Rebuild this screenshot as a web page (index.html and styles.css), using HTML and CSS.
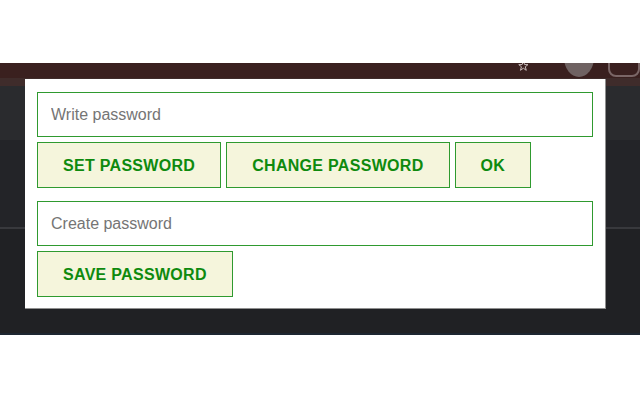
FILE: index.html
```html
<!DOCTYPE html>
<html>
<head>
<meta charset="utf-8">
<link rel="stylesheet" href="styles.css">
</head>
<body>
<div class="page">
  <div class="browser">
    <div class="tabstrip">
      <svg class="star" width="14" height="10" viewBox="0 0 14 10"><path d="M7 -4 L8.6 0.5 L13 0.6 L9.5 3.4 L10.8 8 L7 5.3 L3.2 8 L4.5 3.4 L1 0.6 L5.4 0.5 Z" fill="none" stroke="#c9bcbc" stroke-width="1.3"/></svg>
      <div class="avatar"></div>
      <div class="menu-btn"></div>
    </div>
    <div class="toolbar"></div>
    <div class="content">
      <div class="band-a"></div>
      <div class="band-b"></div>
      <div class="divider"></div>
      <div class="band-c"></div>
    </div>
    <div class="popup">
      <input class="field" type="text" placeholder="Write password">
      <div class="actions">
        <button class="btn">SET PASSWORD</button>
        <button class="btn">CHANGE PASSWORD</button>
        <button class="btn">OK</button>
      </div>
      <input class="field field-second" type="text" placeholder="Create password">
      <div class="actions">
        <button class="btn">SAVE PASSWORD</button>
      </div>
    </div>
  </div>
</div>
</body>
</html>
```

FILE: styles.css
```css
* { box-sizing: border-box; }
html, body { margin: 0; padding: 0; background: #ffffff; }
body { font-family: "Liberation Sans", Arial, sans-serif; width: 640px; height: 400px; overflow: hidden; }
.page { padding-top: 63px; }
.browser { position: relative; height: 272px; background: #202124; display: flex; flex-direction: column; }
.tabstrip { height: 15px; background: #3a201f; display: flex; align-items: flex-start; overflow: hidden; }
.star { margin-left: 518px; margin-top: 0; }
.avatar { width: 40px; height: 40px; border-radius: 50%; background: #6f6262; margin-left: 35px; margin-top: -26px; }
.menu-btn { width: 40px; height: 30px; border: 2px solid #7a6666; border-radius: 8px; margin-left: 14px; margin-top: -16px; }
.toolbar { height: 8px; background: #3f2c2b; }
.content { flex: 1; display: flex; flex-direction: column; }
.band-a { height: 54px; background: #2a2b2e; }
.band-b { height: 87px; background: #232428; }
.divider { height: 2px; background: #38393d; }
.band-c { flex: 1; background: #202124; border-bottom: 2px solid #1d2631; }
.popup { position: absolute; left: 25px; top: 16px; width: 581px; height: 230px; background: #ffffff; padding: 13px 12px 10px 12px; border-right: 1px solid #8f8f8f; border-bottom: 1px solid #8f8f8f; display: flex; flex-direction: column; gap: 5px; }
.field { display: block; width: 556px; height: 45px; margin: 0; border: 1px solid #2f9a2f; padding: 0 13px; font-family: "Liberation Sans", Arial, sans-serif; font-size: 16px; color: #333; background: #fff; outline: none; }
.field::placeholder { color: #757575; }
.field-second { margin-top: 8px; }
.actions { display: flex; gap: 5px; }
.btn { height: 46px; margin: 0; padding: 0 25px; border: 1px solid #2f9a2f; background: #f5f5dc; color: #0e8a0e; font-family: "Liberation Sans", Arial, sans-serif; font-size: 16px; font-weight: bold; letter-spacing: 0.3px; line-height: 19px; cursor: pointer; }
```
